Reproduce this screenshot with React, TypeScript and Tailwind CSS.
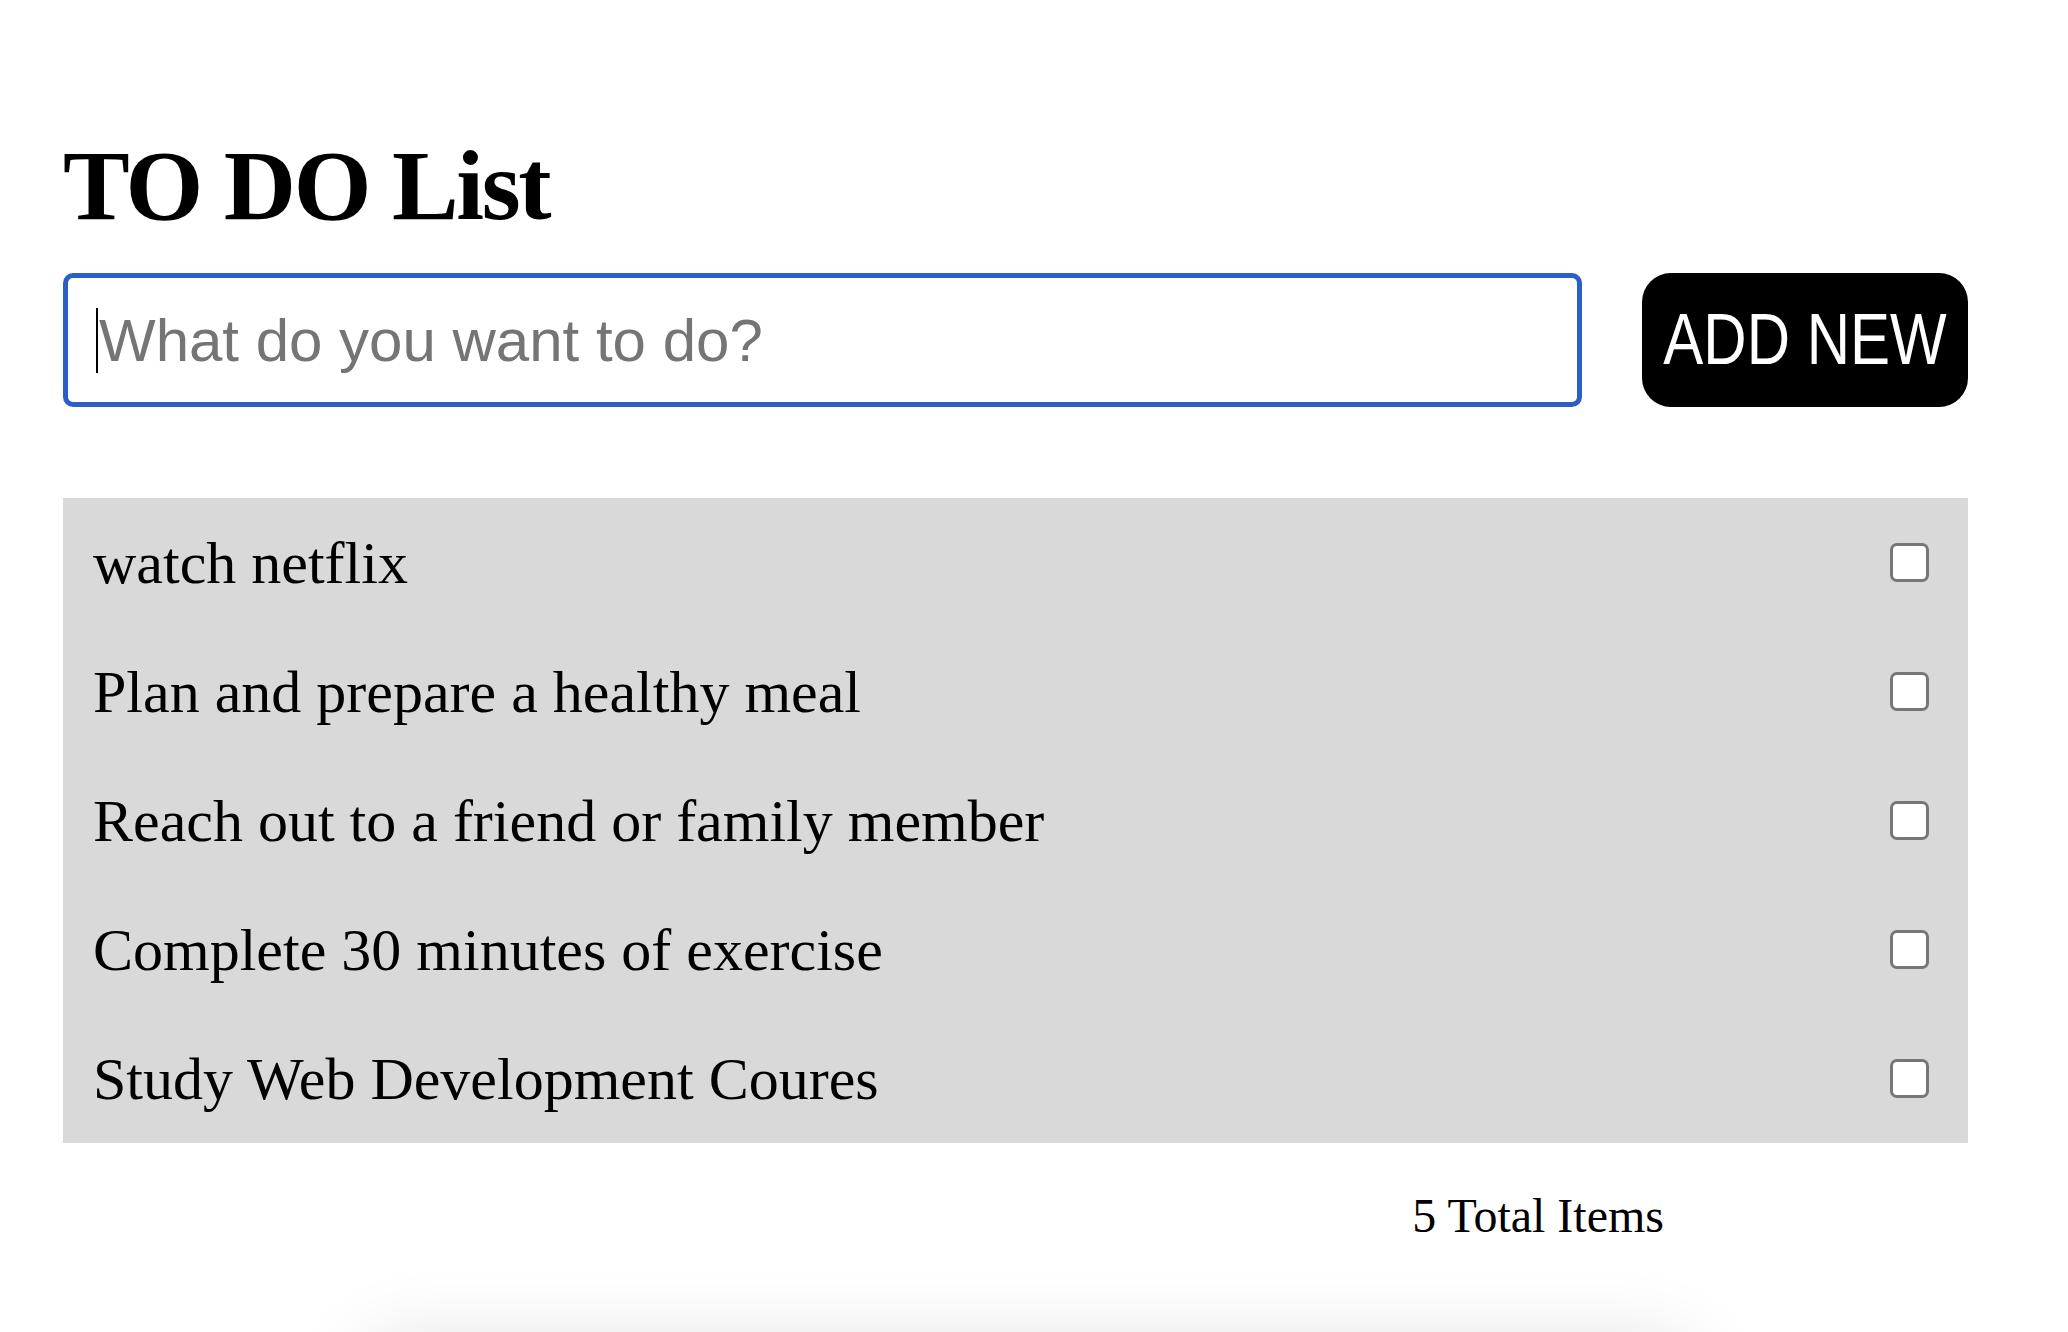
const todos = [
  "watch netflix",
  "Plan and prepare a healthy meal",
  "Reach out to a friend or family member",
  "Complete 30 minutes of exercise",
  "Study Web Development Coures",
]

const App = () => {
  return (
    <div className="min-h-screen w-full overflow-hidden bg-white pl-[63px] pt-[128px] font-['Liberation_Serif',serif] text-black">
      <div className="w-[1905px]">
        <h1 className="text-[100px] font-bold leading-[115px] tracking-[-2.3px]">TO DO List</h1>

        <div className="mt-[30px] flex items-center gap-[60px]">
          <div className="relative flex-1">
            <input
              type="text"
              placeholder="What do you want to do?"
              className="h-[134px] w-full rounded-[10px] border-[5px] border-[#2b5fc7] bg-white pl-[31px] font-['Liberation_Sans',Arial,sans-serif] text-[60px] text-black caret-transparent outline-none placeholder:text-[#757575]"
            />
            <span className="absolute left-[33px] top-[35px] h-[65px] w-[2px] bg-black" />
          </div>
          <button className="flex h-[134px] w-[326px] items-center justify-center rounded-[29px] bg-black font-['Liberation_Sans',Arial,sans-serif] text-[60px] text-white">
            <span className="inline-block scale-y-[1.2] leading-none">ADD NEW</span>
          </button>
        </div>

        <ul className="mt-[91px] bg-[#d9d9d9]">
          {todos.map((item) => (
            <li key={item} className="flex h-[129px] items-center justify-between pl-[30px] pr-[39px]">
              <span className="text-[60px]">{item}</span>
              <input
                type="checkbox"
                className="h-[39px] w-[39px] appearance-none rounded-[7px] border-[3px] border-[#767676] bg-white"
              />
            </li>
          ))}
        </ul>

        <div className="mt-[37px] flex justify-end pr-[304px]">
          <p className="text-[48px]">5 Total Items</p>
        </div>

        <div className="ml-[300px] mt-[92px] h-[200px] w-[1330px] rounded-[40px] bg-white shadow-[0_0_80px_rgba(0,0,0,0.13)]" />
      </div>
    </div>
  )
}

export default App
